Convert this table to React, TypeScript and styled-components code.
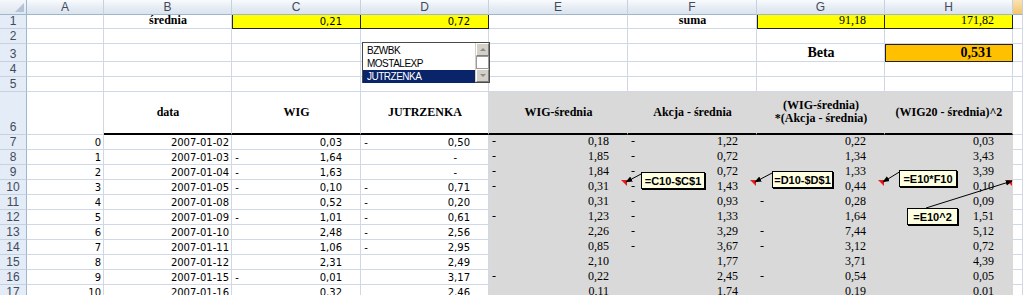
import styled, { createGlobalStyle, css } from "styled-components";

/**
 * Arkusz: beta spółki JUTRZENKA względem WIG
 */
const GlobalStyle = createGlobalStyle`
  html, body {
    margin: 0;
    padding: 0;
    background: #fff;
    overflow: hidden;
  }
  body {
    width: 1023px;
    height: 295px;
  }
`;

const GRID = "#d0d7e5";
const HEAD_LINE = "#9eb6ce";
const HEAD_SEP = "#c5d1de";
const SANS = `"DejaVu Sans", Verdana, sans-serif`;
const SERIF = `"Liberation Serif", "Times New Roman", serif`;

type Fill = "none" | "gray" | "yellow" | "orange";
const fills: Record<Fill, string> = {
  none: "#ffffff",
  gray: "#d9d9d9",
  yellow: "#ffff00",
  orange: "#ffc000",
};

const COLS = ["A", "B", "C", "D", "E", "F", "G", "H"];

// dane z arkusza: nr, data, WIG, JUTRZENKA, WIG-śr, akcja-śr, iloczyn, kwadrat
const rows: [number, string, number, number, number, number, number, number][] = [
  [0, "2007-01-02", 0.03, -0.5, -0.18, -1.22, 0.22, 0.03],
  [1, "2007-01-03", -1.64, 0, -1.85, -0.72, 1.34, 3.43],
  [2, "2007-01-04", -1.63, 0, -1.84, -0.72, 1.33, 3.39],
  [3, "2007-01-05", -0.1, -0.71, -0.31, -1.43, 0.44, 0.1],
  [4, "2007-01-08", 0.52, -0.2, 0.31, -0.93, -0.28, 0.09],
  [5, "2007-01-09", -1.01, -0.61, -1.23, -1.33, 1.64, 1.51],
  [6, "2007-01-10", 2.48, -2.56, 2.26, -3.29, -7.44, 5.12],
  [7, "2007-01-11", 1.06, -2.95, 0.85, -3.67, -3.12, 0.72],
  [8, "2007-01-12", 2.31, 2.49, 2.1, 1.77, 3.71, 4.39],
  [9, "2007-01-15", -0.01, 3.17, -0.22, 2.45, -0.54, 0.05],
  [10, "2007-01-16", 0.32, 2.46, 0.11, 1.74, 0.19, 0.01],
];

const Sheet = styled.div`
  position: relative;
  display: grid;
  grid-template-columns: 27px 77px 128px 129px 128px 139px 129px 128px 128px 1fr;
  grid-template-rows: 15px 14px 15px 18px 15px 15px 43px repeat(11, 15px);
  width: 1023px;
`;

const Corner = styled.div`
  position: relative;
  box-sizing: border-box;
  background: linear-gradient(#f4f7fb, #dfe6ef);
  border-right: 1px solid ${HEAD_LINE};
  border-bottom: 1px solid ${HEAD_LINE};
  &::after {
    content: "";
    position: absolute;
    right: 2px;
    bottom: 2px;
    border-left: 9px solid transparent;
    border-bottom: 9px solid #b4c4d8;
  }
`;

const ColHead = styled.div<{ $active?: boolean }>`
  box-sizing: border-box;
  display: flex;
  align-items: center;
  justify-content: center;
  border-right: 1px solid ${HEAD_SEP};
  border-bottom: 1px solid ${HEAD_LINE};
  background: ${(p) =>
    p.$active
      ? "linear-gradient(#fbe3b4, #f4c46a)"
      : "linear-gradient(#f9fbfd, #e6ecf4 55%, #dbe3ed)"};
  font: 12px "Liberation Sans", Arial, sans-serif;
  color: #3f4b5b;
`;

const RowHead = styled.div`
  box-sizing: border-box;
  display: flex;
  align-items: flex-end;
  justify-content: center;
  background: #e4ecf7;
  border-right: 1px solid ${HEAD_LINE};
  border-bottom: 1px solid ${HEAD_SEP};
  font: 12px/14px "Liberation Sans", Arial, sans-serif;
  color: #3f4b5b;
`;

interface CellProps {
  $fill?: Fill;
  $align?: "left" | "center" | "right" | "split";
  $face?: "sans" | "serif";
  $bold?: boolean;
  $size?: number;
  $pad?: number;
  $rule?: boolean;
  $head?: boolean;
  $frame?: "lead" | "tail" | "full";
  $note?: boolean;
}

const justify = {
  left: "flex-start",
  center: "center",
  right: "flex-end",
  split: "space-between",
};

const Cell = styled.div<CellProps>`
  position: relative;
  box-sizing: border-box;
  display: flex;
  align-items: ${(p) => (p.$head ? "center" : "flex-end")};
  justify-content: ${(p) => justify[p.$align ?? "left"]};
  padding: 0 ${(p) => p.$pad ?? 2}px 1px 3px;
  background: ${(p) => fills[p.$fill ?? "none"]};
  border-right: 1px solid ${(p) => (p.$fill === "gray" ? "transparent" : GRID)};
  border-bottom: 1px solid ${(p) => (p.$fill === "gray" ? "transparent" : GRID)};
  font-family: ${(p) => (p.$face === "serif" ? SERIF : SANS)};
  font-size: ${(p) => p.$size ?? (p.$face === "serif" ? 12 : 10)}px;
  font-weight: ${(p) => (p.$bold ? 700 : 400)};
  line-height: ${(p) => (p.$head ? "13px" : "1.1")};
  text-align: center;
  color: #000;
  white-space: nowrap;

  ${(p) =>
    p.$rule &&
    css`
      border-bottom: 2px solid #000;
    `}

  ${(p) =>
    p.$frame &&
    css`
      border-right-color: #222;
      border-bottom-color: #222;
    `}
  ${(p) =>
    p.$frame === "lead" &&
    css`
      box-shadow: inset 1px 0 0 #222;
    `}
  ${(p) =>
    p.$frame === "full" &&
    css`
      box-shadow: inset 1px 1px 0 #222;
    `}

  ${(p) =>
    p.$note &&
    css`
      &::after {
        content: "";
        position: absolute;
        top: 0;
        right: 0;
        border-left: 6px solid transparent;
        border-top: 6px solid #e81c1c;
      }
    `}
`;

const Sign = styled.span`
  min-width: 4px;
`;

const fmt = (v: number) => Math.abs(v).toFixed(2).replace(".", ",");

// wartość w formacie księgowym: minus przy lewej krawędzi, kreska dla zera
const Amount = ({
  value,
  serif,
  fill,
  frame,
  note,
}: {
  value: number;
  serif?: boolean;
  fill?: Fill;
  frame?: "lead" | "tail" | "full";
  note?: boolean;
}) => {
  const face = serif ? "serif" : "sans";
  if (value === 0) {
    return (
      <Cell $face={face} $fill={fill} $align="right" $pad={31} $frame={frame} $note={note}>
        -
      </Cell>
    );
  }
  return (
    <Cell $face={face} $fill={fill} $align="split" $pad={18} $frame={frame} $note={note}>
      <Sign>{value < 0 ? "-" : ""}</Sign>
      <span>{fmt(value)}</span>
    </Cell>
  );
};

/* lista wyboru spółki */
const ListBox = styled.div`
  position: absolute;
  left: 362px;
  top: 42px;
  width: 128px;
  height: 41px;
  box-sizing: border-box;
  display: flex;
  background: #fff;
  border: 1px solid #4a4a4a;
  z-index: 2;
`;

const ListItems = styled.div`
  flex: 1;
  display: flex;
  flex-direction: column;
  padding-top: 1px;
`;

const ListItem = styled.div<{ $selected?: boolean }>`
  height: 13px;
  padding-left: 4px;
  font: 10px/13px "Liberation Sans", Arial, sans-serif;
  letter-spacing: -0.5px;
  color: ${(p) => (p.$selected ? "#fff" : "#000")};
  background: ${(p) => (p.$selected ? "#0a246a" : "transparent")};
`;

const ScrollBar = styled.div`
  width: 13px;
  display: flex;
  flex-direction: column;
  border-left: 1px solid #d4d0c8;
`;

const ScrollButton = styled.div<{ $down?: boolean }>`
  height: 13px;
  box-sizing: border-box;
  display: flex;
  align-items: center;
  justify-content: center;
  background: #d4d0c8;
  border: 1px solid;
  border-color: #fff #808080 #808080 #fff;
  &::before {
    content: "";
    border-left: 3px solid transparent;
    border-right: 3px solid transparent;
    ${(p) =>
      p.$down
        ? css`
            border-top: 3px solid #8c8c8c;
          `
        : css`
            border-bottom: 3px solid #8c8c8c;
          `}
  }
`;

const ScrollThumb = styled.div`
  flex: 1;
  background: #fff;
  border: 1px solid #9a9a9a;
`;

/* komentarze z formułami */
const Note = styled.div<{ $x: number; $y: number; $w: number }>`
  position: absolute;
  left: ${(p) => p.$x}px;
  top: ${(p) => p.$y}px;
  width: ${(p) => p.$w}px;
  height: 17px;
  box-sizing: border-box;
  display: flex;
  align-items: center;
  justify-content: center;
  background: #ffffe1;
  border: 1px solid #000;
  box-shadow: 1px 1px 0 #000;
  font: bold 11px "Liberation Sans", Tahoma, sans-serif;
  color: #000;
  z-index: 4;
`;

const Arrows = styled.svg`
  position: absolute;
  left: 0;
  top: 0;
  pointer-events: none;
  z-index: 3;
`;

const notes = [
  { x: 641, y: 172, w: 64, text: "=C10-$C$1", from: [643, 173], to: [626, 182] },
  { x: 772, y: 171, w: 61, text: "=D10-$D$1", from: [774, 172], to: [755, 182] },
  { x: 899, y: 170, w: 58, text: "=E10*F10", from: [901, 171], to: [883, 182] },
  { x: 907, y: 208, w: 51, text: "=E10^2", from: [926, 208], to: [1012, 181] },
];

const Blank = ({ fill }: { fill?: Fill }) => <Cell $fill={fill} />;

const App = () => {
  return (
    <>
      <GlobalStyle />
      <Sheet>
        {/* nagłówki kolumn */}
        <Corner />
        {COLS.map((c) => (
          <ColHead key={c}>{c}</ColHead>
        ))}
        <ColHead $active />

        {/* wiersz 1 */}
        <RowHead>1</RowHead>
        <Blank />
        <Cell $face="serif" $bold $size={12} $align="center">
          średnia
        </Cell>
        <Amount value={0.21} fill="yellow" frame="lead" />
        <Amount value={0.72} fill="yellow" frame="tail" />
        <Blank />
        <Cell $face="serif" $bold $size={12} $align="center">
          suma
        </Cell>
        <Amount value={91.18} serif fill="yellow" frame="lead" />
        <Amount value={171.82} serif fill="yellow" frame="tail" />
        <Blank />

        {/* wiersz 2 */}
        <RowHead>2</RowHead>
        {Array.from({ length: 9 }, (_, i) => (
          <Blank key={i} />
        ))}

        {/* wiersz 3 */}
        <RowHead>3</RowHead>
        {Array.from({ length: 6 }, (_, i) => (
          <Blank key={i} />
        ))}
        <Cell $face="serif" $bold $size={14} $align="center">
          Beta
        </Cell>
        <Cell $face="serif" $bold $size={14} $align="right" $pad={20} $fill="orange" $frame="full">
          0,531
        </Cell>
        <Blank />

        {/* wiersze 4-5 */}
        {[4, 5].map((r) => [
          <RowHead key={`h${r}`}>{r}</RowHead>,
          ...Array.from({ length: 9 }, (_, i) => <Blank key={`${r}-${i}`} />),
        ])}

        {/* wiersz 6: nagłówki tabeli */}
        <RowHead>6</RowHead>
        <Blank />
        <Cell $head $rule $face="serif" $bold $size={12} $align="center">
          data
        </Cell>
        <Cell $head $rule $face="serif" $bold $size={12} $align="center">
          WIG
        </Cell>
        <Cell $head $rule $face="serif" $bold $size={12} $align="center">
          JUTRZENKA
        </Cell>
        <Cell $head $rule $fill="gray" $face="serif" $bold $size={12} $align="center">
          WIG-średnia
        </Cell>
        <Cell $head $rule $fill="gray" $face="serif" $bold $size={12} $align="center">
          Akcja - średnia
        </Cell>
        <Cell $head $rule $fill="gray" $face="serif" $bold $size={12} $align="center">
          (WIG-średnia)
          <br />
          *(Akcja - średnia)
        </Cell>
        <Cell $head $rule $fill="gray" $face="serif" $bold $size={12} $align="center">
          (WIG20 - średnia)^2
        </Cell>
        <Blank />

        {/* dane */}
        {rows.map(([n, date, wig, akcja, e, f, g, h], i) => {
          const note = i === 3;
          return [
            <RowHead key={`h${i}`}>{i + 7}</RowHead>,
            <Cell key={`a${i}`} $align="right">
              {n}
            </Cell>,
            <Cell key={`b${i}`} $align="right">
              {date}
            </Cell>,
            <Amount key={`c${i}`} value={wig} />,
            <Amount key={`d${i}`} value={akcja} />,
            <Amount key={`e${i}`} value={e} serif fill="gray" note={note} />,
            <Amount key={`f${i}`} value={f} serif fill="gray" note={note} />,
            <Amount key={`g${i}`} value={g} serif fill="gray" note={note} />,
            <Amount key={`hh${i}`} value={h} serif fill="gray" note={note} />,
            <Blank key={`i${i}`} />,
          ];
        })}

        {/* lista wyboru */}
        <ListBox>
          <ListItems>
            <ListItem>BZWBK</ListItem>
            <ListItem>MOSTALEXP</ListItem>
            <ListItem $selected>JUTRZENKA</ListItem>
          </ListItems>
          <ScrollBar>
            <ScrollButton />
            <ScrollThumb />
            <ScrollButton $down />
          </ScrollBar>
        </ListBox>

        {/* strzałki komentarzy */}
        <Arrows width={1023} height={300} viewBox="0 0 1023 300">
          <defs>
            <marker
              id="head"
              viewBox="0 0 10 10"
              refX="9"
              refY="5"
              markerWidth="7"
              markerHeight="7"
              orient="auto"
            >
              <path d="M0 1 L10 5 L0 9 Z" fill="#000" />
            </marker>
          </defs>
          {notes.map((n) => (
            <line
              key={n.text}
              x1={n.from[0]}
              y1={n.from[1]}
              x2={n.to[0]}
              y2={n.to[1]}
              stroke="#000"
              strokeWidth={1}
              markerEnd="url(#head)"
            />
          ))}
        </Arrows>

        {notes.map((n) => (
          <Note key={n.text} $x={n.x} $y={n.y} $w={n.w}>
            {n.text}
          </Note>
        ))}
      </Sheet>
    </>
  );
};

export default App;
